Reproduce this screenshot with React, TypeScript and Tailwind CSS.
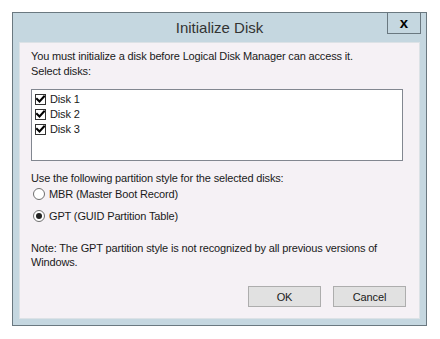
import React from "react";

const font = { fontFamily: '"Liberation Sans", Arial, sans-serif' };

function Check() {
  return (
    <span className="w-[11px] h-[11px] border border-[#333333] bg-white flex items-center justify-center shrink-0">
      <svg width="9" height="9" viewBox="0 0 9 9">
        <path d="M1 4 L3.5 6.5 L8 1.5" stroke="#000" strokeWidth="2" fill="none" strokeLinecap="square" />
      </svg>
    </span>
  );
}

function Radio({ on }: { on?: boolean }) {
  return (
    <span className="w-[12px] h-[12px] rounded-full border border-[#6f6f6f] bg-white flex items-center justify-center shrink-0">
      {on && <span className="w-[6px] h-[6px] rounded-full bg-[#222222]" />}
    </span>
  );
}

export default function App() {
  return (
    <div className="w-[440px] h-[339px] bg-white pt-3 pl-3" style={font}>
      <div className="w-[415px] h-[314px] border border-[#6a7880] bg-[#c5d7e0] flex flex-col">
        <div className="relative h-[29px] flex items-center justify-center">
          <span className="text-[15px] text-[#333333] leading-none">Initialize Disk</span>
          <div className="absolute right-[5px] top-[-1px] w-[34px] h-[22px] border border-[#6a7880] flex items-center justify-center">
            <span className="text-[15px] font-bold text-black leading-none -mt-[2px]">x</span>
          </div>
        </div>
        <div className="mx-[6px] flex-1 mb-[6px] bg-[#f5f1f5] border border-[#dce2e6] pl-[11px] pr-[16px] pt-[6px] flex flex-col text-[11px] tracking-[-0.15px] text-[#1a1a1a] leading-[14px]">
          <div>You must initialize a disk before Logical Disk Manager can access it.</div>
          <div className="mt-[1px]">Select disks:</div>
          <div className="mt-[11px] h-[72px] border border-[#828790] bg-white pt-[2px] pl-[3px] flex flex-col">
            {["Disk 1", "Disk 2", "Disk 3"].map((d) => (
              <div key={d} className="h-[15px] flex items-center gap-[4px] leading-[15px]">
                <Check />
                <span>{d}</span>
              </div>
            ))}
          </div>
          <div className="mt-[10px]">Use the following partition style for the selected disks:</div>
          <div className="-mt-[2px] h-[22px] flex items-center gap-[4px] pl-[2px]">
            <Radio />
            <span>MBR (Master Boot Record)</span>
          </div>
          <div className="h-[22px] flex items-center gap-[4px] pl-[2px]">
            <Radio on />
            <span>GPT (GUID Partition Table)</span>
          </div>
          <div className="mt-[14px]">
            Note: The GPT partition style is not recognized by all previous versions of
            <br />
            Windows.
          </div>
          <div className="mt-[17px] flex justify-end gap-[12px] -mr-[3px]">
            <div className="w-[73px] h-[21px] bg-[#e1e1e1] border border-[#adadad] flex items-center justify-center">OK</div>
            <div className="w-[73px] h-[21px] bg-[#e1e1e1] border border-[#adadad] flex items-center justify-center">Cancel</div>
          </div>
        </div>
      </div>
    </div>
  );
}
